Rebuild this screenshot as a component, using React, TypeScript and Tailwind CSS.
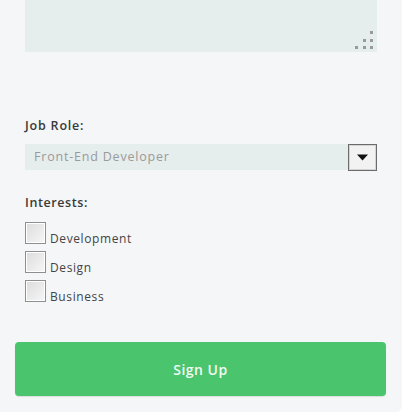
import React from 'react'

function Checkbox({ label }: { label: string }) {
  return (
    <label className="flex items-end h-[29px]">
      <span className="w-[21px] h-[22px] border border-[#8f8f8f] bg-gradient-to-br from-[#dcdcdc] to-[#f7f7f7] shadow-[inset_0_0_0_1px_#ffffff] shrink-0" />
      <span className="ml-[4px] mb-[-3px] text-[12px] tracking-[0.6px] text-[#444] leading-[16px]">{label}</span>
    </label>
  )
}

export default function App() {
  return (
    <div className="w-[416px] h-[416px] bg-white overflow-hidden" style={{ fontFamily: '"Open Sans", Lato, sans-serif' }}>
      <div className="w-[402px] h-[412px] bg-[#f4f6f8] rounded-br-[6px] flex flex-col">
        <div className="ml-[25px] w-[352px] h-[52px] bg-[#e6eded] flex items-end justify-end pr-[3px] pb-[2px]">
          <svg width="20" height="20" viewBox="0 0 20 20">
            <rect x="16" y="1" width="3" height="3" fill="#999" />
            <rect x="9" y="9" width="3" height="3" fill="#999" />
            <rect x="16" y="9" width="3" height="3" fill="#999" />
            <rect x="1" y="16" width="3" height="3" fill="#999" />
            <rect x="9" y="16" width="3" height="3" fill="#999" />
            <rect x="16" y="16" width="3" height="3" fill="#999" />
          </svg>
        </div>

        <div className="ml-[25px] mt-[66px] text-[12.5px] tracking-[0.8px] leading-[16px] font-semibold text-[#3a3a3a]">Job Role:</div>
        <div className="ml-[25px] mt-[10px] w-[352px] h-[26px] bg-[#e6eded] flex items-center justify-between">
          <span className="ml-[9px] text-[12.5px] tracking-[0.8px] text-[#9a9a9a]">Front-End Developer</span>
          <span className="w-[29px] h-[27px] border border-[#6b6b6b] bg-[#f2f2f2] flex items-center justify-center shadow-[inset_0_0_0_1px_#d4d4d4]">
            <svg width="11" height="7" viewBox="0 0 11 7">
              <path d="M0 0.5 L11 0.5 L5.5 6.5 Z" fill="#111" />
            </svg>
          </span>
        </div>

        <div className="ml-[25px] mt-[25px] text-[12.5px] tracking-[0.6px] leading-[16px] font-semibold text-[#3a3a3a]">Interests:</div>
        <div className="ml-[25px] mt-[4px] flex flex-col">
          <Checkbox label="Development" />
          <Checkbox label="Design" />
          <Checkbox label="Business" />
        </div>

        <button className="ml-[15px] mt-[40px] w-[371px] h-[54px] rounded-[4px] bg-[#4bc56d] text-[#f2fbf4] text-[14px] font-semibold tracking-[0.5px] shadow-[0_1px_1px_rgba(0,0,0,0.1)]">
          Sign Up
        </button>
      </div>
    </div>
  )
}
